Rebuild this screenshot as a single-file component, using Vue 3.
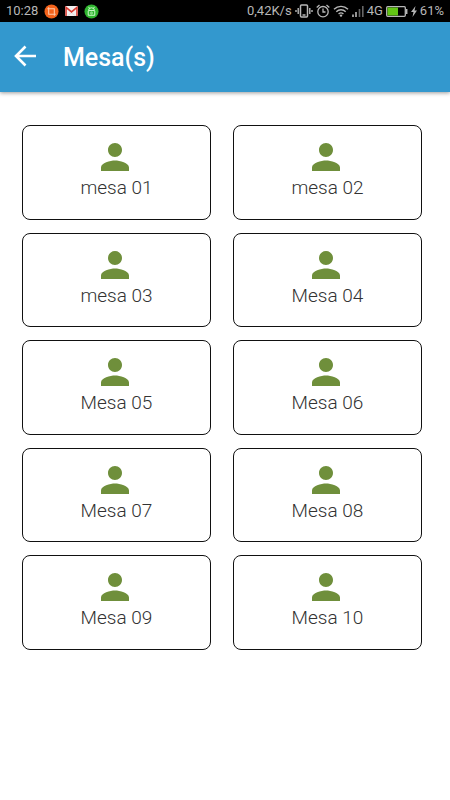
<script setup>
const tables = [
  'mesa 01', 'mesa 02', 'mesa 03', 'Mesa 04', 'Mesa 05',
  'Mesa 06', 'Mesa 07', 'Mesa 08', 'Mesa 09', 'Mesa 10',
]
</script>

<template>
  <div class="screen">
    <div class="status">
      <div class="group left">
        <span class="clock">10:28</span>
        <svg class="badge" viewBox="0 0 16 16">
          <circle cx="8" cy="8" r="7.5" fill="#f4631b" />
          <path d="M3.500 5h7.500v7.500M5 3.500V11h7.500" fill="none" stroke="#ffc9aa" stroke-width="1.100" />
        </svg>
        <svg class="mail" viewBox="0 0 14 11">
          <rect width="14" height="11" rx="1" fill="#f3f0f0" />
          <path d="M2.500 11 7 7.500l4.500 3.500" fill="none" stroke="#d8d4d4" stroke-width=".8" />
          <path d="M1 11V1.500L7 6.500l6-5V11" fill="none" stroke="#d93a30" stroke-width="1.700" />
        </svg>
        <svg class="badge" viewBox="0 0 16 16">
          <circle cx="8" cy="8" r="7.500" fill="#2fb52f" />
          <path d="M4.800 7a3.200 3 0 0 1 6.400 0zM5.800 4.500l-1-1.500M10.200 4.500l1-1.500M4.500 7.500v4.500h7V7.500" fill="none" stroke="#d9ffd6" />
          <circle cx="8" cy="9.600" r="1" fill="none" stroke="#d9ffd6" stroke-width=".7" />
        </svg>
      </div>
      <div class="group right">
        <span>0,42K/s</span>
        <svg class="vibrate" viewBox="0 0 18 14">
          <rect x="5.500" y="1" width="7" height="12" rx="1" fill="none" stroke="#b8b8b8" stroke-width="1.500" />
          <path d="M7.500 11h3M3.200 4v6M14.800 4v6M1 6v2M17 6v2" fill="none" stroke="#b8b8b8" stroke-width="1.400" />
        </svg>
        <svg class="alarm" viewBox="0 0 14 14">
          <circle cx="7" cy="7.700" r="5.200" fill="none" stroke="#b8b8b8" stroke-width="1.300" />
          <path d="M7 4.500v3.500h2.500M.7 3.500 3.500 1M13.300 3.500 10.500 1" fill="none" stroke="#b8b8b8" stroke-width="1.300" />
        </svg>
        <svg class="wifi" viewBox="0 0 16 12">
          <path d="M1 4.200a10 10 0 0 1 14 0M3.300 6.700a6.700 6.700 0 0 1 9.400 0M5.600 9a3.500 3.500 0 0 1 4.800 0" fill="none" stroke="#b8b8b8" stroke-width="1.400" />
          <circle cx="8" cy="10.600" r="1.200" fill="#b8b8b8" />
        </svg>
        <svg class="signal" viewBox="0 0 12 11">
          <path d="M1 8.500V11M4 6v5" stroke="#b8b8b8" stroke-width="1.600" />
          <path d="M7.500 3v8M10.800 0v11" stroke="#666" stroke-width="1.600" />
        </svg>
        <span>4G</span>
        <svg class="battery" viewBox="0 0 22 11">
          <rect x=".7" y=".7" width="18.600" height="9.600" rx="1" fill="none" stroke="#b8b8b8" stroke-width="1.300" />
          <rect x="1.500" y="1.500" width="10.500" height="8" fill="#62c514" />
          <path d="M20.700 3v5" stroke="#b8b8b8" stroke-width="1.500" />
        </svg>
        <svg class="bolt" viewBox="0 0 6 11"><path d="M4.500 0 0 6h2.500L1.500 11 6 4.500H3.500z" fill="#b8b8b8" /></svg>
        <span>61%</span>
      </div>
    </div>

    <header class="bar">
      <button class="back" type="button" aria-label="Back">
        <svg viewBox="0 0 22 22"><path d="M11.500 1.500 2 11l9.500 9.500M2 11h20" fill="none" stroke="#fff" stroke-width="2.600" /></svg>
      </button>
      <h1>Mesa(s)</h1>
    </header>

    <main class="grid">
      <button v-for="name in tables" :key="name" class="card" type="button">
        <svg class="person" viewBox="0 0 24 24" fill="#6f8f3b">
          <path d="M12 12c2.210 0 4-1.790 4-4s-1.790-4-4-4-4 1.790-4 4 1.790 4 4 4zm0 2c-2.670 0-8 1.340-8 4v2h16v-2c0-2.660-5.330-4-8-4z" />
        </svg>
        <span>{{ name }}</span>
      </button>
    </main>
  </div>
</template>

<style>
body {
  background: #fff;
}
</style>

<style scoped>
.screen {
  font-family: Roboto, "Liberation Sans", sans-serif;
  min-height: 100vh;
  background: #fff;
}
.status {
  display: flex;
  justify-content: space-between;
  align-items: center;
  height: 22px;
  padding: 0 6px;
  background: #000;
  color: #b8b8b8;
  font-size: 13px;
  line-height: 22px;
}
.group {
  display: flex;
  align-items: center;
}
.left {
  gap: 6px;
}
.right {
  gap: 3px;
}
svg {
  display: block;
  flex: none;
}
.badge {
  width: 15px;
  height: 15px;
}
.mail {
  width: 13px;
  height: 10px;
}
.vibrate {
  width: 18px;
  height: 14px;
}
.alarm {
  width: 14px;
  height: 14px;
}
.wifi {
  width: 16px;
  height: 12px;
}
.signal {
  width: 12px;
  height: 11px;
}
.battery {
  width: 22px;
  height: 11px;
}
.bolt {
  width: 6px;
  height: 11px;
}
.bar {
  display: flex;
  align-items: center;
  gap: 27px;
  height: 70px;
  padding: 0 14px;
  background: #3398ce;
  box-shadow: 0 1px 4px rgba(0, 0, 0, 0.4);
}
.back {
  padding: 0 0 2px;
  border: 0;
  background: none;
}
.back svg {
  width: 22px;
  height: 22px;
}
h1 {
  margin: 0;
  padding-top: 2px;
  color: #fff;
  font-size: 25px;
  font-weight: 500;
  line-height: 32px;
}
.grid {
  display: grid;
  grid-template-columns: 1fr 1fr;
  gap: 13px 22px;
  padding: 33px 28px 33px 22px;
}
.card {
  display: flex;
  flex-direction: column;
  align-items: center;
  box-sizing: border-box;
  aspect-ratio: 2 / 1;
  padding: 10px 0 0;
  border: 1px solid #111;
  border-radius: 8px;
  background: #fff;
  color: #333;
  font-family: inherit;
  font-size: 19px;
  font-weight: 300;
  line-height: 20px;
}
.person {
  width: 42px;
  height: 42px;
  margin-right: 4px;
}
</style>
